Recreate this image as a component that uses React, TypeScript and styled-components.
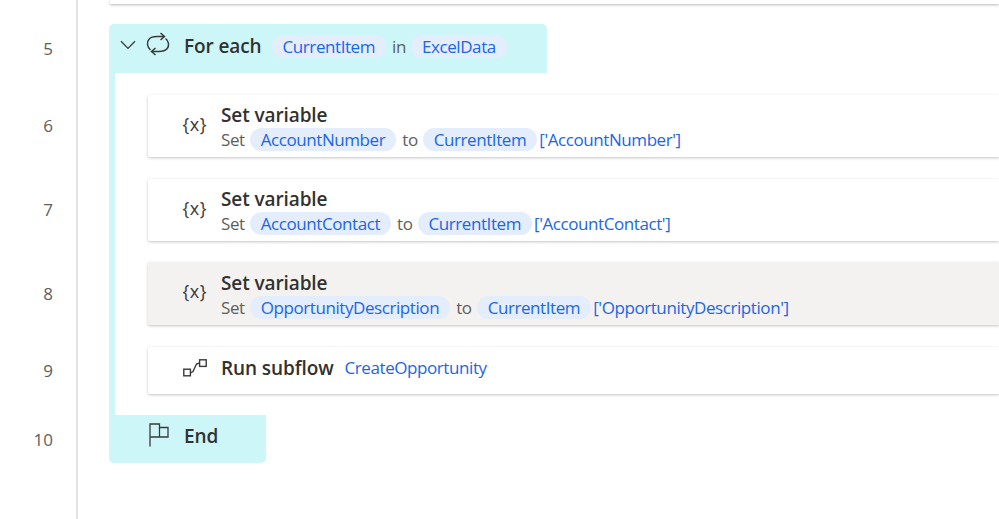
import React from 'react';
import styled, { createGlobalStyle } from 'styled-components';

const GlobalStyle = createGlobalStyle`
  html, body {
    margin: 0;
    height: 100%;
    overflow: hidden;
    background: #ffffff;
    font-family: "Open Sans", "Noto Sans", "Liberation Sans", sans-serif;
  }
`;

const Page = styled.div`
  width: 999px;
  height: 519px;
  display: flex;
  flex-direction: column;
  overflow: hidden;
`;

const Row = styled.div<{ $grow?: boolean }>`
  display: grid;
  grid-template-columns: 78px 1fr;
  flex: ${(p) => (p.$grow ? '1' : '0 0 auto')};
`;

const LineNo = styled.div<{ $top?: number; $bottom?: number }>`
  border-right: 2px solid #e6e4e2;
  padding: ${(p) => p.$top ?? 0}px 23px ${(p) => p.$bottom ?? 0}px 0;
  display: flex;
  align-items: center;
  justify-content: flex-end;
  font-size: 17px;
  color: #605e5c;
`;

const Slot = styled.div`
  padding-left: 31px;
  display: flex;
  min-width: 0;
`;

const TopStrip = styled.div`
  flex: 1;
  height: 4px;
  margin-bottom: 20px;
  margin-left: 1px;
  background: #ffffff;
  box-shadow: 0 1px 3px rgba(0, 0, 0, 0.28);
`;

const LoopHead = styled.div`
  width: 438px;
  height: 49px;
  box-sizing: border-box;
  background: #cdf6f9;
  border-radius: 5px 5px 0 0;
  display: flex;
  align-items: center;
  padding: 0 0 6px 11px;
  white-space: nowrap;
`;

const LoopEnd = styled.div`
  width: 157px;
  height: 48px;
  box-sizing: border-box;
  background: #cdf6f9;
  border-radius: 0 0 5px 5px;
  display: flex;
  align-items: center;
  padding: 0 0 7px 40px;
`;

const LoopBody = styled.div<{ $top: number; $bottom: number }>`
  flex: 1;
  min-width: 0;
  border-left: 6px solid #cdf6f9;
  padding: ${(p) => p.$top}px 0 ${(p) => p.$bottom}px 33px;
`;

const Card = styled.div<{ $height: number; $selected?: boolean; $lift?: number }>`
  height: ${(p) => p.$height}px;
  box-sizing: border-box;
  padding-bottom: ${(p) => p.$lift ?? 0}px;
  background: ${(p) => (p.$selected ? '#f3f2f1' : '#ffffff')};
  border-radius: 2px 0 0 2px;
  box-shadow: 0 1px 3px rgba(0, 0, 0, 0.24);
  display: flex;
  align-items: center;
  white-space: nowrap;
`;

const IconSlot = styled.div`
  width: 73px;
  flex: none;
  display: flex;
  justify-content: flex-end;
  padding-right: 14px;
  box-sizing: border-box;
`;

const VarGlyph = styled.span`
  font-size: 18px;
  line-height: 24px;
  letter-spacing: 0.5px;
  color: #3b3a39;
  margin-bottom: 5px;
`;

const Stack = styled.div`
  display: flex;
  flex-direction: column;
  margin-top: 2px;
`;

const Title = styled.div`
  font-size: 19px;
  line-height: 24px;
  font-weight: 600;
  color: #323130;
  letter-spacing: -0.1px;
`;

const Line = styled.div`
  display: flex;
  align-items: center;
  height: 23px;
  margin-top: 1px;
  font-size: 17px;
  color: #605e5c;
  letter-spacing: -0.42px;
`;

const Pill = styled.span`
  height: 23px;
  box-sizing: border-box;
  padding: 0 11px;
  display: inline-flex;
  align-items: center;
  border-radius: 12px;
  background: #e4edfc;
  color: #1a66e6;
`;

const Word = styled.span`
  margin: 0 5px 0 6px;
`;

const Lead = styled.span`
  margin-right: 5px;
`;

const Source = styled.span`
  margin-left: 2px;
  color: #1a66e6;
`;

const HeadTitle = styled.span`
  font-size: 19px;
  font-weight: 600;
  color: #323130;
  margin: 0 10px 0 14px;
  letter-spacing: -0.1px;
`;

const EndTitle = styled(HeadTitle)`
  margin: 0 0 0 15px;
`;

const SubflowName = styled.span`
  margin-left: 11px;
  font-size: 17px;
  color: #1a66e6;
  letter-spacing: -0.42px;
`;

const ChevronIcon = styled.svg`
  margin-bottom: 1px;
  flex: none;
`;

const Chevron = () => (
  <ChevronIcon width="16" height="10" viewBox="0 0 16 10" fill="none" stroke="#3b3a39" strokeWidth="1.3">
    <path d="M1 1.2 L8 8.4 L15 1.2" />
  </ChevronIcon>
);

const LoopIcon = styled.svg`
  margin: 0 0 3px 10px;
  flex: none;
`;

const Loop = () => (
  <LoopIcon width="24" height="24" viewBox="0 0 24 24" fill="none" stroke="#3b3a39" strokeWidth="1.5">
    <path d="M4.5 18 C1 15 0.5 10 3 7.2 C4.8 5 8 4.5 11 4.5 H18" />
    <path d="M14.5 1 L18.5 4.5 L14.5 8" />
    <path d="M19.5 6.5 C23 9 23.5 14 21 16.8 C19.2 19 16 19.5 13 19.5 H6" />
    <path d="M9.5 16 L5.5 19.5 L9.5 23" />
  </LoopIcon>
);

const SubflowIcon = () => (
  <svg width="24" height="18" viewBox="0 0 24 18" fill="none" stroke="#3b3a39" strokeWidth="1.4">
    <rect x="0.8" y="10.2" width="6.6" height="6.6" />
    <rect x="16.6" y="0.8" width="6.6" height="6.6" />
    <path d="M7.5 14 L10 12.5 L13.5 5 L16.5 4" />
  </svg>
);

const FlagIcon = styled.svg`
  margin-bottom: 2px;
  flex: none;
`;

const Flag = () => (
  <FlagIcon width="20" height="24" viewBox="0 0 20 24" fill="none" stroke="#3b3a39" strokeWidth="1.3">
    <path d="M1 23.5 V1 H10.5 V4.5 H19 V14 H1" />
    <path d="M10.5 4.5 V14" />
  </FlagIcon>
);

type Step = {
  line: number;
  target: string;
  source: string;
  top: number;
  bottom: number;
  selected?: boolean;
  height: number;
};

const steps: Step[] = [
  { line: 6, target: 'AccountNumber', source: "['AccountNumber']", top: 22, bottom: 11, height: 62 },
  { line: 7, target: 'AccountContact', source: "['AccountContact']", top: 11, bottom: 11, height: 62 },
  { line: 8, target: 'OpportunityDescription', source: "['OpportunityDescription']", top: 10, bottom: 11, height: 63, selected: true },
];

export default function App() {
  return (
    <Page>
      <GlobalStyle />
      <Row>
        <LineNo />
        <Slot>
          <TopStrip />
        </Slot>
      </Row>
      <Row>
        <LineNo>5</LineNo>
        <Slot>
          <LoopHead>
            <Chevron />
            <Loop />
            <HeadTitle>For each</HeadTitle>
            <Line>
              <Pill>CurrentItem</Pill>
              <Word>in</Word>
              <Pill>ExcelData</Pill>
            </Line>
          </LoopHead>
        </Slot>
      </Row>
      {steps.map((s) => (
        <Row key={s.line}>
          <LineNo $top={s.top} $bottom={s.bottom + 1}>{s.line}</LineNo>
          <Slot>
            <LoopBody $top={s.top} $bottom={s.bottom}>
              <Card $height={s.height} $selected={s.selected}>
                <IconSlot>
                  <VarGlyph>{'{x}'}</VarGlyph>
                </IconSlot>
                <Stack>
                  <Title>Set variable</Title>
                  <Line>
                    <Lead>Set</Lead>
                    <Pill>{s.target}</Pill>
                    <Word>to</Word>
                    <Pill>CurrentItem</Pill>
                    <Source>{s.source}</Source>
                  </Line>
                </Stack>
              </Card>
            </LoopBody>
          </Slot>
        </Row>
      ))}
      <Row>
        <LineNo $top={11} $bottom={21}>9</LineNo>
        <Slot>
          <LoopBody $top={11} $bottom={21}>
            <Card $height={47} $lift={6}>
              <IconSlot>
                <SubflowIcon />
              </IconSlot>
              <Title>Run subflow</Title>
              <SubflowName>CreateOpportunity</SubflowName>
            </Card>
          </LoopBody>
        </Slot>
      </Row>
      <Row>
        <LineNo>10</LineNo>
        <Slot>
          <LoopEnd>
            <Flag />
            <EndTitle>End</EndTitle>
          </LoopEnd>
        </Slot>
      </Row>
      <Row $grow>
        <LineNo />
        <Slot />
      </Row>
    </Page>
  );
}
